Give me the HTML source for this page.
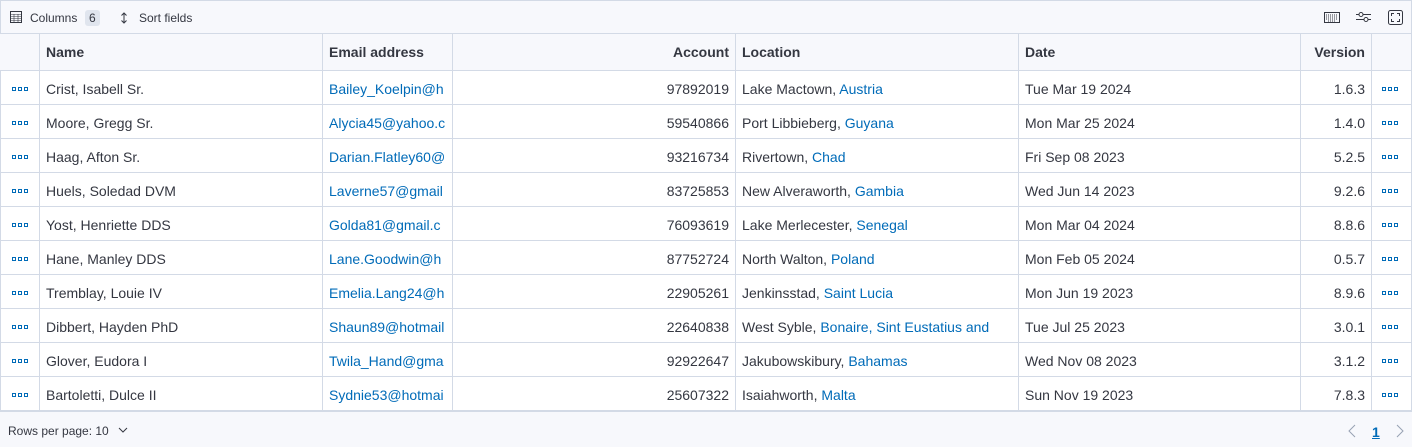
<!DOCTYPE html><html><head><style>
*{box-sizing:border-box;margin:0;padding:0}
body{width:1412px;height:447px;background:#fff;font-family:"Liberation Sans",sans-serif;color:#343741;position:relative;overflow:hidden}
.wrap{position:absolute;left:0;top:0;width:1412px;height:411px;border:1px solid #d3dae6;border-bottom:none}
.tb{height:33px;background:#f7f8fc;border-bottom:1px solid #d3dae6;font-size:12px;display:flex;align-items:center;position:relative}
.badge{background:#e0e5ee;border-radius:3px;padding:1px 4px;margin-left:6px;font-size:12px}
table{border-collapse:collapse;table-layout:fixed;position:absolute;top:33px;left:-1px;width:1412px}
td,th{border:1px solid #d3dae6;height:34px;font-size:14px;padding:2px 6px 0;white-space:nowrap;overflow:hidden;text-align:left}
th{height:37px;background:#f7f8fc;font-weight:bold;color:#343741;padding-top:0}
tr>*:first-child{border-left:1px solid #d3dae6}
.r{text-align:right}
a{color:#006bb8;text-decoration:none}
.dots{display:flex;gap:2px;justify-content:center}
.dots i{width:4px;height:4px;border:1px solid #006bb8;display:block}
td:last-child .dots{margin-left:-3px}
.foot{position:absolute;top:411px;left:0;width:1412px;height:36px;background:#f7f8fc;border-top:1px solid #d3dae6;font-size:12px}
</style></head><body>
<div class="wrap">
<div class="tb">
<svg style="position:absolute;left:9px;top:10px" width="12" height="12" viewBox="0 0 12 12"><rect x=".5" y=".5" width="11" height="11" fill="none" stroke="#343741"/><path d="M1 3.5h10M1 5.5h10M1 7.5h10M1 9.5h10M4 3v8M8 3v8" stroke="#343741" stroke-width=".6"/></svg>
<span style="position:absolute;left:29px;top:10px">Columns</span><span class="badge" style="position:absolute;left:78px;top:9px">6</span>
<svg style="position:absolute;left:118px;top:11px" width="10" height="12" viewBox="0 0 10 12"><path d="M5 1v10M2.5 3.5L5 1l2.5 2.5M2.5 8.5L5 11l2.5-2.5" fill="none" stroke="#343741"/></svg>
<span style="position:absolute;left:138px;top:10px">Sort fields</span>
<svg style="position:absolute;left:1323px;top:11px" width="16" height="11" viewBox="0 0 16 11"><rect x=".5" y=".5" width="15" height="10" fill="none" stroke="#343741"/><path d="M2 3h12M2 5h12M2 7h12M4 9h8" stroke="#343741" stroke-dasharray="1 1"/></svg>
<svg style="position:absolute;left:1355px;top:10px" width="15" height="12" viewBox="0 0 15 12"><path d="M0 3.5h15M0 8.5h15" stroke="#343741"/><circle cx="5" cy="3.5" r="2" fill="#fff" stroke="#343741"/><circle cx="10" cy="8.5" r="2" fill="#fff" stroke="#343741"/></svg>
<svg style="position:absolute;left:1387px;top:9px" width="15" height="15" viewBox="0 0 15 15"><rect x=".5" y=".5" width="14" height="14" rx="2" fill="none" stroke="#343741"/><path d="M3.5 6V3.5H6M9 3.5h2.5V6M11.5 9v2.5H9M6 11.5H3.5V9" fill="none" stroke="#343741"/></svg>
</div>
</div>
<table>
<colgroup><col style="width:40px"><col style="width:283px"><col style="width:130px"><col style="width:283px"><col style="width:283px"><col style="width:282px"><col style="width:71px"><col style="width:40px"></colgroup>
<tr><th></th><th>Name</th><th>Email address</th><th class="r">Account</th><th>Location</th><th>Date</th><th class="r">Version</th><th></th></tr>
<tr><td><div class="dots"><i></i><i></i><i></i></div></td><td>Crist, Isabell Sr.</td><td><a>Bailey_Koelpin@h</a></td><td class="r">97892019</td><td>Lake Mactown, <a>Austria</a></td><td>Tue Mar 19 2024</td><td class="r">1.6.3</td><td><div class="dots"><i></i><i></i><i></i></div></td></tr>
<tr><td><div class="dots"><i></i><i></i><i></i></div></td><td>Moore, Gregg Sr.</td><td><a>Alycia45@yahoo.c</a></td><td class="r">59540866</td><td>Port Libbieberg, <a>Guyana</a></td><td>Mon Mar 25 2024</td><td class="r">1.4.0</td><td><div class="dots"><i></i><i></i><i></i></div></td></tr>
<tr><td><div class="dots"><i></i><i></i><i></i></div></td><td>Haag, Afton Sr.</td><td><a>Darian.Flatley60@</a></td><td class="r">93216734</td><td>Rivertown, <a>Chad</a></td><td>Fri Sep 08 2023</td><td class="r">5.2.5</td><td><div class="dots"><i></i><i></i><i></i></div></td></tr>
<tr><td><div class="dots"><i></i><i></i><i></i></div></td><td>Huels, Soledad DVM</td><td><a>Laverne57@gmail</a></td><td class="r">83725853</td><td>New Alveraworth, <a>Gambia</a></td><td>Wed Jun 14 2023</td><td class="r">9.2.6</td><td><div class="dots"><i></i><i></i><i></i></div></td></tr>
<tr><td><div class="dots"><i></i><i></i><i></i></div></td><td>Yost, Henriette DDS</td><td><a>Golda81@gmail.c</a></td><td class="r">76093619</td><td>Lake Merlecester, <a>Senegal</a></td><td>Mon Mar 04 2024</td><td class="r">8.8.6</td><td><div class="dots"><i></i><i></i><i></i></div></td></tr>
<tr><td><div class="dots"><i></i><i></i><i></i></div></td><td>Hane, Manley DDS</td><td><a>Lane.Goodwin@h</a></td><td class="r">87752724</td><td>North Walton, <a>Poland</a></td><td>Mon Feb 05 2024</td><td class="r">0.5.7</td><td><div class="dots"><i></i><i></i><i></i></div></td></tr>
<tr><td><div class="dots"><i></i><i></i><i></i></div></td><td>Tremblay, Louie IV</td><td><a>Emelia.Lang24@h</a></td><td class="r">22905261</td><td>Jenkinsstad, <a>Saint Lucia</a></td><td>Mon Jun 19 2023</td><td class="r">8.9.6</td><td><div class="dots"><i></i><i></i><i></i></div></td></tr>
<tr><td><div class="dots"><i></i><i></i><i></i></div></td><td>Dibbert, Hayden PhD</td><td><a>Shaun89@hotmail</a></td><td class="r">22640838</td><td>West Syble, <a>Bonaire, Sint Eustatius and</a></td><td>Tue Jul 25 2023</td><td class="r">3.0.1</td><td><div class="dots"><i></i><i></i><i></i></div></td></tr>
<tr><td><div class="dots"><i></i><i></i><i></i></div></td><td>Glover, Eudora I</td><td><a>Twila_Hand@gma</a></td><td class="r">92922647</td><td>Jakubowskibury, <a>Bahamas</a></td><td>Wed Nov 08 2023</td><td class="r">3.1.2</td><td><div class="dots"><i></i><i></i><i></i></div></td></tr>
<tr><td><div class="dots"><i></i><i></i><i></i></div></td><td>Bartoletti, Dulce II</td><td><a>Sydnie53@hotmai</a></td><td class="r">25607322</td><td>Isaiahworth, <a>Malta</a></td><td>Sun Nov 19 2023</td><td class="r">7.8.3</td><td><div class="dots"><i></i><i></i><i></i></div></td></tr>
</table>
<div class="foot">
<span style="position:absolute;left:8px;top:12px">Rows per page: 10</span>
<svg style="position:absolute;left:118px;top:15px" width="10" height="6" viewBox="0 0 10 6"><path d="M1 1l4 4 4-4" fill="none" stroke="#343741"/></svg>
<svg style="position:absolute;left:1348px;top:12px" width="8" height="14" viewBox="0 0 8 14"><path d="M7 1L1 7l6 6" fill="none" stroke="#98a2b3"/></svg>
<span style="position:absolute;left:1372px;top:12px;font-size:14px;font-weight:bold;color:#006bb8;text-decoration:underline">1</span>
<svg style="position:absolute;left:1396px;top:12px" width="8" height="14" viewBox="0 0 8 14"><path d="M1 1l6 6-6 6" fill="none" stroke="#98a2b3"/></svg>
</div>
</body></html>
